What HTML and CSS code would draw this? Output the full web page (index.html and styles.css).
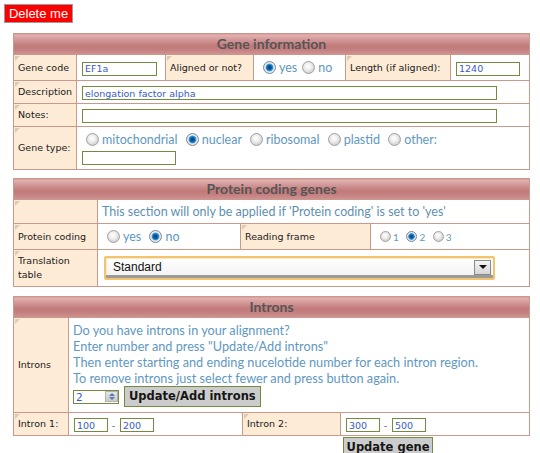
FILE: index.html
```html
<!DOCTYPE html>
<html>
<head>
<meta charset="utf-8">
<title>Gene</title>
<link rel="stylesheet" href="styles.css">
</head>
<body>
<button class="delete" type="button">Delete me</button>
<form class="gene-form">
<table class="sect t-gene">
  <colgroup><col class="g1"><col class="g2"><col class="g3"><col class="g4"><col class="g5"><col class="g6"></colgroup>
  <tr><th colspan="6">Gene information</th></tr>
  <tr class="r26">
    <td class="lbl">Gene code</td>
    <td class="val"><input class="inp w75" type="text" value="EF1a"></td>
    <td class="lbl">Aligned or not?</td>
    <td class="val txt"><span class="rd on"></span>yes<span class="rd"></span>no</td>
    <td class="lbl">Length (if aligned):</td>
    <td class="val"><input class="inp w64" type="text" value="1240"></td>
  </tr>
  <tr class="r23">
    <td class="lbl">Description</td>
    <td class="val" colspan="5"><input class="inp w414" type="text" value="elongation factor alpha"></td>
  </tr>
  <tr class="r23">
    <td class="lbl">Notes:</td>
    <td class="val" colspan="5"><input class="inp w414" type="text" value=""></td>
  </tr>
  <tr class="r43">
    <td class="lbl">Gene type:</td>
    <td class="val" colspan="5">
      <div class="txt radios"><span class="rd"></span>mitochondrial <span class="rd on"></span>nuclear <span class="rd"></span>ribosomal <span class="rd"></span>plastid <span class="rd"></span>other:</div>
      <input class="inp w94 other" type="text" value="">
    </td>
  </tr>
</table>

<table class="sect t-prot">
  <colgroup><col class="p1"><col class="p2"><col class="p3"><col class="p4"></colgroup>
  <tr><th colspan="4">Protein coding genes</th></tr>
  <tr class="r24">
    <td class="lbl"></td>
    <td class="val txt note" colspan="3">This section will only be applied if 'Protein coding' is set to 'yes'</td>
  </tr>
  <tr class="r26">
    <td class="lbl">Protein coding</td>
    <td class="val txt"><span class="rd"></span>yes <span class="rd on"></span>no</td>
    <td class="lbl">Reading frame</td>
    <td class="val txt small"><span class="rd sm"></span>1 <span class="rd sm on"></span>2 <span class="rd sm"></span>3</td>
  </tr>
  <tr class="r37">
    <td class="lbl two">Translation<br>table</td>
    <td class="val" colspan="3">
      <div class="sel"><span class="sel-text">Standard</span><span class="sel-btn"><span class="tri"></span></span></div>
    </td>
  </tr>
</table>

<table class="sect t-intr">
  <colgroup><col class="i1"><col class="i2"><col class="i3"><col class="i4"></colgroup>
  <tr><th colspan="4">Introns</th></tr>
  <tr class="r95">
    <td class="lbl">Introns</td>
    <td class="val txt intro" colspan="3">
      <div class="lines">Do you have introns in your alignment?<br>Enter number and press "Update/Add introns"<br>Then enter starting and ending nucelotide number for each intron region.<br>To remove introns just select fewer and press button again.</div>
      <div class="actions">
        <span class="spin"><input class="spin-in" type="text" value="2"><span class="spin-btn"><span class="up"></span><span class="dn"></span></span></span>
        <button class="btn" type="button">Update/Add introns</button>
      </div>
    </td>
  </tr>
  <tr class="r23">
    <td class="lbl">Intron 1:</td>
    <td class="val"><span class="range"><input class="inp w34" type="text" value="100"><span class="dash">-</span><input class="inp w34" type="text" value="200"></span></td>
    <td class="lbl">Intron 2:</td>
    <td class="val"><span class="range"><input class="inp w34" type="text" value="300"><span class="dash">-</span><input class="inp w34" type="text" value="500"></span></td>
  </tr>
</table>
<div class="submit-row"><button class="btn big" type="button">Update gene</button></div>
</form>
</body>
</html>
```
FILE: styles.css
```css
body {
  margin: 4px;
  background: #fff;
  font-family: "DejaVu Sans", Verdana, sans-serif;
}
.delete {
  display: block;
  box-sizing: border-box;
  width: 69px;
  height: 19px;
  padding: 0;
  background: #ff0000;
  color: #fff;
  border: 1px solid #9a9a9a;
  font: 13px/17px "Liberation Sans", Arial, sans-serif;
  text-align: center;
}
.gene-form { margin: 0; }
.sect {
  border-collapse: collapse;
  table-layout: fixed;
  width: 517px;
  margin: 0 0 0 9px;
}
.t-gene { margin-top: 10px; }
.t-prot { margin-top: 8px; }
.t-intr { margin-top: 9px; }
.g1 { width: 63px; } .g2 { width: 89px; } .g3 { width: 88px; }
.g4 { width: 92px; } .g5 { width: 105px; } .g6 { width: 79px; }
.p1 { width: 84px; } .p2 { width: 143px; } .p3 { width: 130px; } .p4 { width: 159px; }
.i1 { width: 55px; } .i2 { width: 174px; } .i3 { width: 98px; } .i4 { width: 189px; }

.sect th, .sect td {
  border: 1px solid #c9998b;
  padding: 0 4px;
}
.sect th {
  height: 20px;
  padding: 0;
  background: linear-gradient(#e6b4b4 0%, #d09494 30%, #c27a7a 55%, #c47f7f 75%, #cf9393 100%);
  color: #555;
  font: bold 14px/20px Lato, "Open Sans", sans-serif;
  text-align: center;
}
.r23 td { height: 22px; }
.r24 td { height: 23px; }
.r26 td { height: 25px; }
.r37 td { height: 36px; }
.r43 td { height: 42px; }
.r95 td { height: 94px; }

td.lbl {
  position: relative;
  background: #fdebd6;
  color: #1a1a1a;
  font-size: 9.5px;
  line-height: 12px;
  vertical-align: middle;
  white-space: nowrap;
}
td.lbl.two { line-height: 14px; }
td.lbl::before {
  content: "";
  position: absolute;
  left: 1px;
  top: 1px;
  border-top: 5px solid #dccbb2;
  border-right: 5px solid transparent;
}
td.val {
  padding: 0 4px;
  vertical-align: middle;
  white-space: nowrap;
}
.txt {
  font-family: Lato, "Open Sans", sans-serif;
  font-size: 12.5px;
  color: #6198c0;
}
.note { color: #5f8fb0; padding-left: 6px; }
.small { font-size: 10px; }
.inp {
  box-sizing: border-box;
  height: 14px;
  padding: 0 2px;
  margin: 0 0 0 1px;
  border: 1px solid #718b3f;
  background: #fff;
  color: #3a5bc8;
  font: 9.5px/12px "DejaVu Sans", Verdana, sans-serif;
  vertical-align: middle;
  outline: none;
}
.w75 { width: 75px; }
.w64 { width: 64px; }
.w414 { width: 415px; }
.w94 { width: 94px; }
.w34 { width: 34px; }
.radios { line-height: 17px; }
.other { display: block; margin-top: 3px; }

.rd {
  display: inline-block;
  box-sizing: border-box;
  width: 13px;
  height: 13px;
  margin: 0 3px 0 5px;
  border-radius: 50%;
  border: 1px solid #a3a3a3;
  background: radial-gradient(circle at 45% 40%, #ffffff 0, #f0f0f0 35%, #cfcfcf 75%, #bdbdbd 100%);
  vertical-align: -2px;
}
.rd.on {
  border-color: #7c8a96;
  background: radial-gradient(circle at 50% 50%, #083f77 0, #0b5b9e 2px, #3d9ce0 3.5px, #cfe3f2 4.2px, #e9e9e9 5px, #c4c4c4 100%);
}
.rd.sm { width: 11px; height: 11px; margin: 0 2px 0 5px; vertical-align: -1px; }
.rd.sm.on {
  background: radial-gradient(circle at 50% 50%, #083f77 0, #0b5b9e 1.5px, #3d9ce0 3px, #cfe3f2 3.6px, #e9e9e9 4.2px, #c4c4c4 100%);
}

.sel {
  box-sizing: border-box;
  display: flex;
  align-items: center;
  justify-content: space-between;
  width: 391px;
  height: 24px;
  margin-left: 2px;
  padding: 0 2px 2px 7px;
  border: 2px solid #f2c46e;
  border-radius: 2px;
  background: linear-gradient(#ffffff, #f1f1f1);
  box-shadow: inset 0 -3px 0 #9b9b9b, inset 1px 1px 0 #fbe7c0;
  font: 12px "Liberation Sans", Arial, sans-serif;
  color: #111;
}
.sel-btn {
  box-sizing: border-box;
  display: flex;
  align-items: center;
  justify-content: center;
  width: 17px;
  height: 15px;
  border: 1px solid #8a8a8a;
  background: linear-gradient(#f5f5f5, #d6d6d6);
}
.tri {
  border-top: 4px solid #111;
  border-left: 4px solid transparent;
  border-right: 4px solid transparent;
}

.intro { vertical-align: top; padding-left: 5px; }
.lines { line-height: 16px; padding-top: 0; margin-top: -1px; font-size: 12.7px; }
.actions {
  display: flex;
  align-items: center;
  gap: 5px;
  margin-top: 0;
}
.spin {
  box-sizing: border-box;
  display: inline-flex;
  align-items: center;
  width: 46px;
  height: 14px;
  border: 1px solid #718b3f;
  background: #fff;
}
.spin-in {
  width: 28px;
  border: 0;
  padding: 0 0 0 2px;
  font: 10.5px/12px "DejaVu Sans", Verdana, sans-serif;
  color: #3a5bc8;
  outline: none;
  background: transparent;
}
.spin-btn {
  box-sizing: border-box;
  display: flex;
  flex-direction: column;
  align-items: center;
  justify-content: center;
  gap: 1px;
  width: 15px;
  height: 11px;
  margin-left: 1px;
  background: linear-gradient(#e6e6e6, #c9c9c9);
  border: 1px solid #b4b4b4;
}
.up { border-bottom: 3px solid #5a78b0; border-left: 3px solid transparent; border-right: 3px solid transparent; }
.dn { border-top: 3px solid #5a78b0; border-left: 3px solid transparent; border-right: 3px solid transparent; }

.btn {
  box-sizing: border-box;
  height: 21px;
  padding: 0 4px;
  background: #cccccc;
  border: 1px solid #718b3f;
  color: #151515;
  font: bold 11.5px/19px "DejaVu Sans", Verdana, sans-serif;
  white-space: nowrap;
}
.range { display: inline-flex; align-items: center; vertical-align: middle; }
.dash { color: #777; font-size: 10px; width: 11px; text-align: center; }
.submit-row { padding: 0 0 0 339px; }
.btn.big { width: 90px; height: 22px; padding: 0; font-size: 11.5px; }
```
